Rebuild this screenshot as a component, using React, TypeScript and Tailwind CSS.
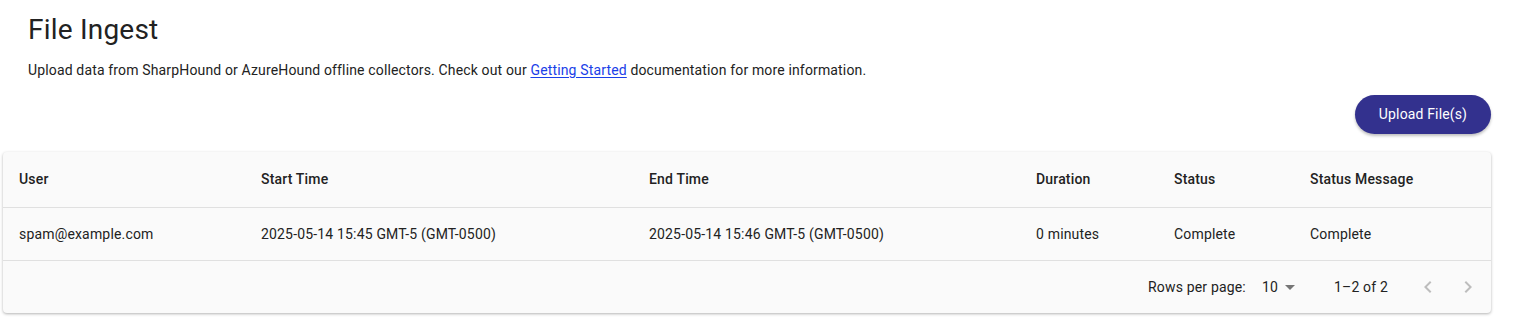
const rows = [
  {
    user: "spam@example.com",
    start: "2025-05-14 15:45 GMT-5 (GMT-0500)",
    end: "2025-05-14 15:46 GMT-5 (GMT-0500)",
    duration: "0 minutes",
    status: "Complete",
    message: "Complete",
  },
];

const cols = ["w-[242px]", "w-[388px]", "w-[387px]", "w-[138px]", "w-[136px]", "flex-1"];

const App = () => {
  return (
    <div className="min-h-[328px] bg-white font-['Roboto',sans-serif] text-[#222]">
      <div className="px-[28px] pt-[14px]">
        <h1 className="text-[28px] leading-[32px] tracking-[0.00735em] text-[#222]">File Ingest</h1>
        <p className="mt-[14px] text-[14px] leading-[20px] tracking-[0.01071em] text-[#222]">
          Upload data from SharpHound or AzureHound offline collectors. Check out our{" "}
          <a href="#" className="text-[#1a40e8] underline underline-offset-2">
            Getting Started
          </a>{" "}
          documentation for more information.
        </p>
      </div>
      <div className="flex justify-end pr-[26px] mt-[15px]">
        <button className="h-[39px] w-[136px] rounded-full bg-[#33318e] text-[14px] tracking-[0.01071em] text-white shadow-[0_2px_3px_rgba(0,0,0,0.25)]">
          Upload File(s)
        </button>
      </div>
      <div className="ml-[3px] mr-[26px] mt-[18px] rounded-[4px] bg-[#fafafa] shadow-[0_1px_3px_rgba(0,0,0,0.3)] tracking-[0.01071em]">
        <div className="flex h-[56px] items-center border-b border-[#e0e0e0] px-[16px] text-[14px] font-medium">
          {["User", "Start Time", "End Time", "Duration", "Status", "Status Message"].map((h, i) => (
            <div key={h} className={cols[i]}>
              {h}
            </div>
          ))}
        </div>
        {rows.map((r) => (
          <div
            key={r.user}
            className="flex h-[53px] items-center border-b border-[#e0e0e0] px-[16px] text-[14px]"
          >
            {[r.user, r.start, r.end, r.duration, r.status, r.message].map((v, i) => (
              <div key={i} className={cols[i]}>
                {v}
              </div>
            ))}
          </div>
        ))}
        <div className="flex h-[52px] items-center justify-end pr-[3px] text-[14px] text-[#222]">
          <span>Rows per page:</span>
          <div className="relative ml-[8px] mr-[32px] pl-[8px] pr-[24px]">
            <span>10</span>
            <svg
              width="24"
              height="24"
              viewBox="0 0 24 24"
              className="absolute right-0 top-1/2 -translate-y-1/2 text-[#757575]"
            >
              <path d="M7 10l5 5 5-5z" fill="currentColor" />
            </svg>
          </div>
          <span>1–2 of 2</span>
          <div className="ml-[20px] flex text-[#bdbdbd]">
            <div className="p-[8px]">
              <svg width="24" height="24" viewBox="0 0 24 24">
                <path d="M15.41 7.41 14 6l-6 6 6 6 1.41-1.41L10.83 12z" fill="currentColor" />
              </svg>
            </div>
            <div className="p-[8px]">
              <svg width="24" height="24" viewBox="0 0 24 24">
                <path d="M10 6 8.59 7.41 13.17 12l-4.58 4.59L10 18l6-6z" fill="currentColor" />
              </svg>
            </div>
          </div>
        </div>
      </div>
    </div>
  );
};

export default App;
